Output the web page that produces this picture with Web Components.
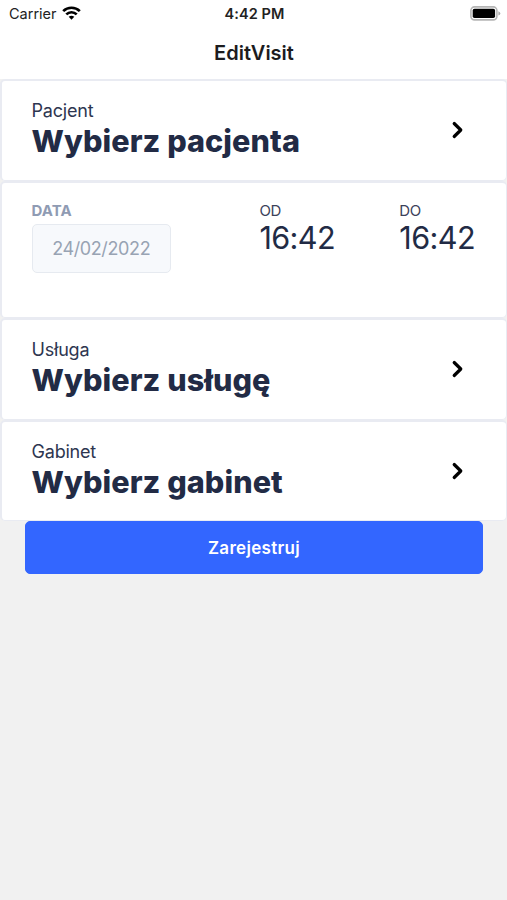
<!DOCTYPE html>
<html lang="pl"><head><meta charset="utf-8"><title>EditVisit</title>
<style>html,body{margin:0;height:100%;background:#f1f1f1;overflow:hidden}body{font-family:Inter,"Liberation Sans",sans-serif;color:#222b45}</style></head><body>
<visit-screen></visit-screen>
<script>
const define=(name,html)=>customElements.define(name,class extends HTMLElement{
  constructor(){super();this.attachShadow({mode:'open'}).innerHTML=html}
});
define('status-bar',`<style>
:host{display:grid;grid-template-columns:1fr auto 1fr;align-items:center;height:27px;padding:0 6px 0 9px;box-sizing:border-box;color:#222;font-size:14.5px;line-height:18px}
.left{display:flex;align-items:center;gap:5px}.left svg{margin-top:-2px}.time{font-weight:600;letter-spacing:.1px;margin-right:1px}svg{display:block}.bat{justify-self:end}
</style><div class="left"><span>Carrier</span><svg width="19" height="14" viewBox="0 0 19 14" fill="none" stroke="#000" stroke-width="2.7"><path d="M1.2 5.1C5.8.6 13.2.6 17.8 5.1M4.3 8.4C7.2 5.5 11.8 5.5 14.7 8.4"/><path d="M9.5 13.7 6.7 10.8Q9.5 8.6 12.3 10.8Z" fill="#000" stroke="none"/></svg></div>
<span class="time">4:42 PM</span>
<svg class="bat" width="31" height="15" viewBox="0 0 31 15"><rect x=".9" y=".9" width="26" height="13" rx="3.6" fill="#fff" stroke="#b5b5b5" stroke-width="1.6"/><rect x="2.7" y="2.7" width="22.4" height="9.4" rx="1.8"/><path d="M28.4 5.3Q30.3 6 30.3 7.4T28.4 9.6Z" fill="#aaa"/></svg>`);
define('nav-bar',`<style>:host{display:flex;align-items:center;justify-content:center;height:52px;color:#1c1c1e;font-size:20px;font-weight:600;line-height:24px;text-indent:1px}</style><slot></slot>`);
define('visit-card',`<style>:host{display:block;box-sizing:border-box;height:102px;border:solid #e9ebf2;border-width:2px 1px 1px 2px;border-radius:5px;background:#fff;padding:18px 31px 0 29.5px}</style><slot></slot>`);
define('chevron-icon',`<style>:host{display:block;width:14px;height:20px}svg{display:block}</style><svg width="14" height="20" viewBox="0 0 14 20" fill="none" stroke="#000" stroke-width="3.2" stroke-linecap="round" stroke-linejoin="round"><path d="M3.2 3.5 9.8 10 3.2 16.5"/></svg>`);
define('picker-row',`<style>
:host{display:flex;justify-content:space-between}.label{font-size:18px;line-height:24px;letter-spacing:-.2px;color:#2e3650}.value{font-size:30.6px;line-height:36px;font-weight:800;letter-spacing:.06px;white-space:nowrap}chevron-icon{margin:21px 10px 0 0}
</style><div><div class="label"><slot name="label"></slot></div><div class="value"><slot></slot></div></div><chevron-icon></chevron-icon>`);
define('date-field',`<style>
:host{display:block;width:140.5px}.label{font-size:15px;line-height:20px;font-weight:700;color:#8f9bb3;letter-spacing:.1px}
.box{box-sizing:border-box;height:49px;margin-top:3px;border:1.4px solid #e6eaf0;border-radius:5px;background:#f7f9fc;display:flex;align-items:center;justify-content:center;font-size:18px;letter-spacing:-.38px;color:#98a3b3}
</style><div class="label"><slot name="label"></slot></div><div class="box"><slot></slot></div>`);
define('time-field',`<style>:host{display:block;width:76px}.label{font-size:15px;line-height:20px;letter-spacing:-.4px;color:#3b425a}.value{font-size:30.6px;line-height:34px;letter-spacing:-.6px;white-space:nowrap}</style><div class="label"><slot name="label"></slot></div><div class="value"><slot></slot></div>`);
define('primary-button',`<style>:host{display:block;padding:0 24px 0 25px}button{display:block;width:100%;height:53px;border:1px solid #3366ff;border-radius:5px;background:#36f;color:#fff;padding:1px 0 0;font:600 17px Inter,"Liberation Sans",sans-serif;letter-spacing:.3px}</style><button><slot></slot></button>`);
define('visit-screen',`<style>
:host{display:block}header{background:#fff}.schedule{height:137px}.last{height:101px}.row{display:flex}.od{margin-left:88.5px}.do{margin-left:64.3px}
</style><header><status-bar></status-bar><nav-bar>EditVisit</nav-bar></header>
<main><visit-card><picker-row><span slot="label">Pacjent</span>Wybierz pacjenta</picker-row></visit-card>
<visit-card class="schedule"><div class="row"><date-field><span slot="label">DATA</span>24/02/2022</date-field><time-field class="od"><span slot="label">OD</span>16:42</time-field><time-field class="do"><span slot="label">DO</span>16:42</time-field></div></visit-card>
<visit-card><picker-row><span slot="label">Usługa</span>Wybierz usługę</picker-row></visit-card>
<visit-card class="last"><picker-row><span slot="label">Gabinet</span>Wybierz gabinet</picker-row></visit-card>
<primary-button>Zarejestruj</primary-button></main>`);
</script></body></html>
